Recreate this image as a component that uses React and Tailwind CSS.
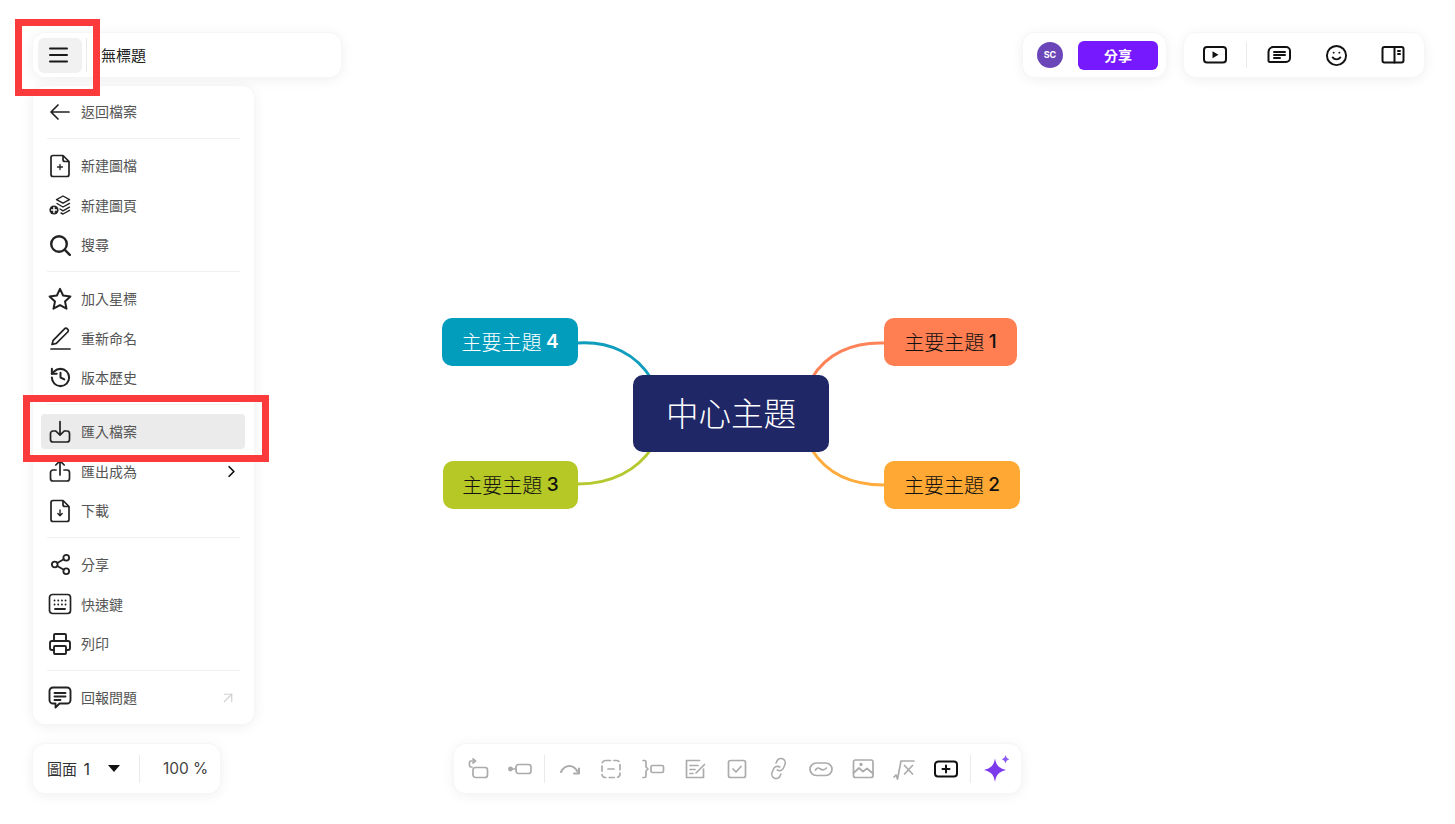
import React from 'react';
import { ChevronRight, ArrowUpRight, Share2, Printer, Link, Smile, History } from 'lucide-react';

const FONT = '"Noto Sans CJK TC", Inter, sans-serif';

const Svg = ({ children, size = 24, sw = 1.7, color = '#222' }) => (
  <svg width={size} height={size} viewBox="0 0 24 24" fill="none" stroke={color} strokeWidth={sw} strokeLinecap="round" strokeLinejoin="round" className="shrink-0">
    {children}
  </svg>
);

const filePath = 'M5 1.5h10l6 6v13a2 2 0 0 1-2 2H5a2 2 0 0 1-2-2v-17a2 2 0 0 1 2-2z M15 1.5v4a2 2 0 0 0 2 2h4';

const FilePlusIcon = () => (
  <Svg><path d={filePath} /><path d="M12 10.5v5M9.5 13h5" strokeWidth="1.3" /></Svg>
);
const LayersPlusIcon = () => (
  <Svg sw={1.4}>
    <path d="M15 3l6.5 3.6L15 10.2 8.5 6.6z" />
    <path d="M9 10.5l6 3.5 6.5-3.6M12 16l3 1.8 6.5-3.6M13 20l2 1 6.5-3.6" />
    <circle cx="6" cy="17" r="4.6" fill="#222" stroke="none" />
    <path d="M6 14.6v4.8M3.6 17h4.8" stroke="#fff" strokeWidth="1.5" />
  </Svg>
);
const PencilLineIcon = () => (
  <Svg>
    <path d="M3 23h19" />
    <path d="M4 18.5l1.2-4.2L16.5 2.8a2 2 0 0 1 2.9 0l.3.3a2 2 0 0 1 0 2.9L8.3 17.4z" />
  </Svg>
);
const ImportIcon = () => (
  <Svg>
    <path d="M7 11H5a2.5 2.5 0 0 0-2.5 2.5v6A2.5 2.5 0 0 0 5 22h14a2.5 2.5 0 0 0 2.5-2.5v-6A2.5 2.5 0 0 0 19 11h-2" />
    <path d="M12 1.5V15M7.8 11l4.200 4.200 4.200-4.200" />
  </Svg>
);
const ExportIcon = () => (
  <Svg>
    <path d="M8 11H5a2.5 2.5 0 0 0-2.5 2.5v6A2.5 2.5 0 0 0 5 22h14a2.5 2.5 0 0 0 2.5-2.5v-6A2.5 2.5 0 0 0 19 11h-3" />
    <path d="M12 16V2M7.8 6l4.200-4.200L16.200 6" />
  </Svg>
);
const FileDownIcon = () => (
  <Svg><path d={filePath} /><path d="M12 11v5.500M9.800 14.500l2.200 2.200 2.200-2.200" strokeWidth="1.4" /></Svg>
);
const KeyboardIcon = () => (
  <Svg>
    <rect x="1.500" y="2.500" width="21" height="19" rx="3" />
    <path d="M6.500 8.500h.1M10.200 8.500h.1M13.900 8.500h.1M17.500 8.500h.1M6.500 12.500h.1M10.200 12.500h.1M13.900 12.500h.1M17.500 12.500h.1M7 17h10" strokeWidth="1.8" />
  </Svg>
);
const FeedbackIcon = () => (
  <Svg sw={1.9}>
    <path d="M5 1.500h14A3.500 3.500 0 0 1 22.500 5v9a3.500 3.500 0 0 1-3.500 3.500h-7.500L7.500 21.500v-4H5A3.500 3.500 0 0 1 1.500 14V5A3.500 3.500 0 0 1 5 1.500z" />
    <path d="M6.500 7h11M6.500 10.500h11M6.500 14h6" />
  </Svg>
);
const SearchIcon = () => (
  <Svg sw={2.4}>
    <circle cx="11" cy="11" r="7.800" />
    <path d="M16.800 16.800l5 5" />
  </Svg>
);
const StarIcon = () => (
  <Svg sw={2}>
    <path d="M12 1.800l3.100 6.700 7.300.9-5.400 5 1.500 7.300L12 18.100l-6.500 3.600L7 14.400l-5.400-5 7.300-.9z" />
  </Svg>
);

const Row = ({ icon, label, right, active }) => (
  <div className={`flex items-center h-[35px] mt-[4.5px] first:mt-0 pl-[7px] pr-[8px] rounded ${active ? 'bg-[#ebebeb]' : ''}`}>
    <div className="w-6 flex justify-center">{icon}</div>
    <span className="ml-[9px] text-[14px] text-[#555] flex-1">{label}</span>
    {right}
  </div>
);

const Divider = () => <div className="h-px bg-[#f0f0f0] ml-[6px] mr-[5px] mt-[9px] mb-[9px]" />;

const Panel = ({ className, children }) => (
  <div className={`bg-white rounded-xl shadow-[0_0_0_1px_#f6f6f6,0_2px_14px_rgba(0,0,0,0.07)] ${className}`}>
    {children}
  </div>
);

const Sep = ({ className }) => <div className={`w-px bg-[#eaeaea] ${className}`} />;

const ToolButton = ({ children }) => (
  <div className="w-[41.85px] h-[26px] flex items-center justify-center">{children}</div>
);

const GREY = '#ababab';

const Toolbar = () => (
  <Panel className="absolute left-[454px] top-[744px] w-[567px] h-[49px] flex items-center pl-[3px]">
    <ToolButton>
      <Svg color={GREY}>
        <path d="M8 4H5a1.500 1.500 0 0 0-1.500 1.500v3A1.500 1.500 0 0 0 5 10h1" />
        <path d="M7 2l2.500 2L7 6" />
        <rect x="7" y="10.500" width="14.500" height="10" rx="2.500" />
      </Svg>
    </ToolButton>
    <ToolButton>
      <Svg color={GREY}>
        <circle cx="2.500" cy="12" r="1.600" fill={GREY} />
        <path d="M4 12h4" />
        <rect x="8" y="7.500" width="15" height="9" rx="2.500" />
      </Svg>
    </ToolButton>
    <Sep className="h-[28px] ml-[3px] mr-[4px]" />
    <ToolButton>
      <Svg color={GREY} sw={2}>
        <path d="M3 15c2-4 4.500-6 8.500-6s6 2 8 5.500" />
        <path d="M21 11.500v5h-5" />
      </Svg>
    </ToolButton>
    <ToolButton>
      <Svg color={GREY}>
        <rect x="3" y="3.500" width="18" height="17" rx="3.500" strokeDasharray="5 3.500" />
        <path d="M9 12h6" />
      </Svg>
    </ToolButton>
    <ToolButton>
      <Svg color={GREY}>
        <path d="M2 3.500h1.500a1.500 1.500 0 0 1 1.500 1.500v5l2 2-2 2v5a1.500 1.500 0 0 1-1.500 1.500H2" />
        <rect x="10" y="8.500" width="12.500" height="7" rx="1.500" />
      </Svg>
    </ToolButton>
    <ToolButton>
      <Svg color={GREY}>
        <path d="M20.500 12v8.500h-17v-17h13" />
        <path d="M7 8.500h8M7 12.500h5M7 16.500h3" />
        <path d="M13 16l8.500-8.500" />
      </Svg>
    </ToolButton>
    <ToolButton>
      <Svg color={GREY}>
        <rect x="3.500" y="3.500" width="17" height="17" rx="2" />
        <path d="M8 12l3 3 5-5.500" />
      </Svg>
    </ToolButton>
    <ToolButton>
      <Link size={21} color={GREY} strokeWidth={1.8} className="-rotate-[22deg]" />
    </ToolButton>
    <ToolButton>
      <Svg color={GREY}>
        <rect x="1" y="6" width="22" height="12.500" rx="6.250" />
        <path d="M6.500 13c1.500-2.500 3-2.500 5-1s3.500 1.500 6-1" />
      </Svg>
    </ToolButton>
    <ToolButton>
      <Svg color={GREY}>
        <rect x="2.500" y="3" width="19.500" height="17.500" rx="2" />
        <path d="M2.500 16l5.500-5 4 3.500 4-3 6 5" />
        <circle cx="10" cy="7.500" r="0.800" />
      </Svg>
    </ToolButton>
    <ToolButton>
      <Svg color={GREY}>
        <path d="M2 20l2-2 1.500 4L9 4h13" />
        <path d="M12.500 8.500l8 8.500M20.500 8.500l-8 8.500" />
      </Svg>
    </ToolButton>
    <ToolButton>
      <Svg color="#111" sw={2}>
        <path d="M5 4.500h15a3 3 0 0 1 3 3v9a3 3 0 0 1-3 3H4a3 3 0 0 1-3-3V8a3.500 3.500 0 0 1 4-3.500z" />
        <path d="M12 8.500v7M8.500 12h7" />
      </Svg>
    </ToolButton>
    <Sep className="h-[28px] ml-[3px] mr-[5px]" />
    <ToolButton>
      <svg width="28" height="28" viewBox="0 0 28 28">
        <path d="M12 3.500c1.200 6.500 3.500 9.500 11 11.500-7.500 2-9.800 4.800-11 12-1.200-7.200-3.500-10-11-12 7.500-2 9.800-5 11-11.500z" fill="#7c3aed" />
        <path d="M22.500 0c.6 2.500 1.500 3.500 3.800 4.200-2.300.8-3.200 1.800-3.800 4.300-.6-2.500-1.500-3.500-3.800-4.300 2.300-.7 3.200-1.700 3.800-4.200z" fill="#8b5cf6" />
      </svg>
    </ToolButton>
  </Panel>
);

const NODE_BASE = 'absolute h-[48px] rounded-[10px] flex items-center justify-center text-[20px] font-light whitespace-pre';
const DIGIT = 'font-[Inter] font-medium text-[19px]';

const MindMap = () => (
  <>
    <svg width="1455" height="824" className="absolute left-0 top-0" fill="none" strokeWidth="3">
      <path d="M578 343C610 341 637 354 652 380" stroke="#0e9dbd" />
      <path d="M578 484C612 484 637 470 652 448" stroke="#b5c92f" />
      <path d="M884 343C852 342 826 354 812 378" stroke="#ff8358" />
      <path d="M884 485C850 485 826 472 812 450" stroke="#ffab3d" />
    </svg>
    <div className="absolute left-[633px] top-[375px] w-[196px] h-[77px] pb-[2px] rounded-[10px] bg-[#1f2766] text-white text-[32.500px] font-light flex items-center justify-center">中心主題</div>
    <div className={`${NODE_BASE} left-[442px] top-[318px] w-[136px] bg-[#029dbd] text-white`}>主要主題 <b className="font-[Inter] font-semibold text-[19px]">4</b></div>
    <div className={`${NODE_BASE} left-[884px] top-[318px] w-[133px] bg-[#ff7f52] text-[#111]`}>主要主題 <span className={DIGIT}>1</span></div>
    <div className={`${NODE_BASE} left-[443px] top-[461px] w-[135px] bg-[#b6c825] text-[#111]`}>主要主題 <span className={DIGIT}>3</span></div>
    <div className={`${NODE_BASE} left-[884px] top-[461px] w-[136px] bg-[#ffa934] text-[#111]`}>主要主題 <span className={DIGIT}>2</span></div>
  </>
);

const App = () => {
  return (
    <div className="relative w-[1455px] h-[824px] overflow-hidden bg-white" style={{ fontFamily: FONT }}>
      <MindMap />

      <div className="absolute left-[33px] top-[33px] w-[308px]">
        <Panel className="h-[44px] flex items-center pl-[5px]">
          <div className="w-[44px] h-[35px] pr-[3px] rounded-md bg-[#f1f1f1] flex items-center justify-center">
            <svg width="19" height="16" viewBox="0 0 19 16" stroke="#1a1a1a" strokeWidth="2" strokeLinecap="round">
              <path d="M1 1.500h17M1 8h17M1 14.500h17" />
            </svg>
          </div>
          <Sep className="h-[34px] ml-[4px]" />
          <span className="ml-[14px] text-[15px] text-[#222]">無標題</span>
        </Panel>

        <Panel className="mt-[9px] w-[221px] h-[638px] pl-[8px] pr-[9px] py-[8px] rounded-[14px]">
          <Row icon={<Svg><path d="M21 12H3.500M10 5l-7 7 7 7" /></Svg>} label="返回檔案" />
          <Divider />
          <Row icon={<FilePlusIcon />} label="新建圖檔" />
          <Row icon={<LayersPlusIcon />} label="新建圖頁" />
          <Row icon={<SearchIcon />} label="搜尋" />
          <Divider />
          <Row icon={<StarIcon />} label="加入星標" />
          <Row icon={<PencilLineIcon />} label="重新命名" />
          <Row icon={<History size={23} color="#222" strokeWidth={2.1} />} label="版本歷史" />
          <Divider />
          <Row icon={<ImportIcon />} label="匯入檔案" active />
          <Row icon={<ExportIcon />} label="匯出成為" right={<ChevronRight size={19} color="#111" strokeWidth={2.2} className="-mr-[4px]" />} />
          <Row icon={<FileDownIcon />} label="下載" />
          <Divider />
          <Row icon={<Share2 size={23} color="#222" strokeWidth={1.9} />} label="分享" />
          <Row icon={<KeyboardIcon />} label="快速鍵" />
          <Row icon={<Printer size={24} color="#222" strokeWidth={1.9} />} label="列印" />
          <Divider />
          <Row icon={<FeedbackIcon />} label="回報問題" right={<ArrowUpRight size={18} color="#cfcfcf" strokeWidth={1.5} />} />
        </Panel>

        <Panel className="mt-[20px] w-[187px] h-[49px] flex items-center pl-[14px] text-[15px] text-[#333]">
          <span className="whitespace-pre">圖面 <span className="ml-[3px] font-[Inter] text-[16px]">1</span></span>
          <svg width="12" height="7" viewBox="0 0 12 7" className="ml-[18px]"><path d="M0 0h12L6 7z" fill="#111" /></svg>
          <Sep className="h-[28px] ml-[19px]" />
          <span className="ml-[23px] font-[Inter] text-[15.500px] text-[#444] whitespace-pre">100 %</span>
        </Panel>
      </div>

      <div className="absolute right-[31px] top-[33px] flex gap-[18px]">
        <Panel className="w-[143px] h-[44px] flex items-center pl-[14px]">
          <div className="w-[26px] h-[26px] rounded-full bg-[#6b46b9] text-white text-[9px] font-bold font-[Inter] flex items-center justify-center">SC</div>
          <div className="ml-[15px] w-[80px] h-[29px] rounded-md bg-[#7619ff] text-white text-[14px] font-bold flex items-center justify-center">分享</div>
        </Panel>
        <Panel className="w-[240px] h-[44px] flex items-center pl-[19px]">
          <Svg color="#111" sw={2}>
            <rect x="1" y="4" width="22" height="15.500" rx="3" />
            <path d="M9.500 8.300l6 3.500-6 3.500z" fill="#111" stroke="none" />
          </Svg>
          <Sep className="h-[26px] ml-[19px]" />
          <div className="ml-[20px]"><Svg color="#111" sw={2}>
            <path d="M6 4h13a4 4 0 0 1 4 4v7a4 4 0 0 1-4 4H2.500a1.500 1.500 0 0 1-1-1V9a5 5 0 0 1 4.500-5z" />
            <path d="M7 9h11M7 12h11M7 15h6" />
          </Svg></div>
          <Smile size={23} color="#111" strokeWidth={2} className="ml-[34px]" />
          <div className="ml-[33px]"><Svg color="#111" sw={2}>
            <rect x="1.500" y="4" width="21" height="15.500" rx="2" />
            <path d="M13.500 4v15.500M17 8h2M17 11h2" />
          </Svg></div>
        </Panel>
      </div>

      <Toolbar />

      <div className="absolute left-[15px] top-[19px] w-[85px] h-[77px] border-[7px] border-[#fb3a3c]" />
      <div className="absolute left-[23px] top-[395px] w-[246px] h-[67px] border-[7px] border-[#fb3a3c]" />
    </div>
  );
};

export default App;
